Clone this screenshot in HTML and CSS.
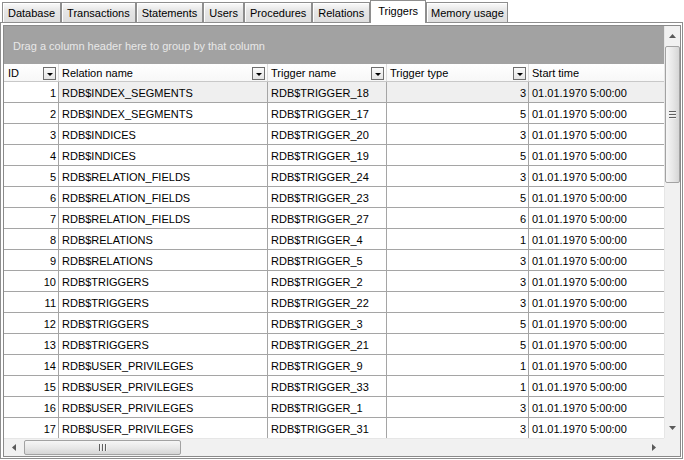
FILE: index.html
```html
<!DOCTYPE html>
<html>
<head>
<meta charset="utf-8">
<link rel="stylesheet" href="styles.css">
</head>
<body>
<div class="tabs">
  <div class="tab">Database</div>
  <div class="tab">Transactions</div>
  <div class="tab">Statements</div>
  <div class="tab">Users</div>
  <div class="tab">Procedures</div>
  <div class="tab">Relations</div>
  <div class="tab active">Triggers</div>
  <div class="tab">Memory usage</div>
</div>
<div class="panel">
  <div class="grid">
    <div class="main">
      <div class="group">Drag a column header here to group by that column</div>
      <div class="head cols">
        <div class="hcell"><span>ID</span><i class="dd"></i></div>
        <div class="hcell"><span>Relation name</span><i class="dd"></i></div>
        <div class="hcell"><span>Trigger name</span><i class="dd"></i></div>
        <div class="hcell"><span>Trigger type</span><i class="dd"></i></div>
        <div class="hcell"><span>Start time</span></div>
      </div>
      <div class="body">
        <div class="row cols focus"><div class="c num">1</div><div class="c">RDB$INDEX_SEGMENTS</div><div class="c">RDB$TRIGGER_18</div><div class="c num">3</div><div class="c">01.01.1970 5:00:00</div></div>
        <div class="row cols"><div class="c num">2</div><div class="c">RDB$INDEX_SEGMENTS</div><div class="c">RDB$TRIGGER_17</div><div class="c num">5</div><div class="c">01.01.1970 5:00:00</div></div>
        <div class="row cols"><div class="c num">3</div><div class="c">RDB$INDICES</div><div class="c">RDB$TRIGGER_20</div><div class="c num">3</div><div class="c">01.01.1970 5:00:00</div></div>
        <div class="row cols"><div class="c num">4</div><div class="c">RDB$INDICES</div><div class="c">RDB$TRIGGER_19</div><div class="c num">5</div><div class="c">01.01.1970 5:00:00</div></div>
        <div class="row cols"><div class="c num">5</div><div class="c">RDB$RELATION_FIELDS</div><div class="c">RDB$TRIGGER_24</div><div class="c num">3</div><div class="c">01.01.1970 5:00:00</div></div>
        <div class="row cols"><div class="c num">6</div><div class="c">RDB$RELATION_FIELDS</div><div class="c">RDB$TRIGGER_23</div><div class="c num">5</div><div class="c">01.01.1970 5:00:00</div></div>
        <div class="row cols"><div class="c num">7</div><div class="c">RDB$RELATION_FIELDS</div><div class="c">RDB$TRIGGER_27</div><div class="c num">6</div><div class="c">01.01.1970 5:00:00</div></div>
        <div class="row cols"><div class="c num">8</div><div class="c">RDB$RELATIONS</div><div class="c">RDB$TRIGGER_4</div><div class="c num">1</div><div class="c">01.01.1970 5:00:00</div></div>
        <div class="row cols"><div class="c num">9</div><div class="c">RDB$RELATIONS</div><div class="c">RDB$TRIGGER_5</div><div class="c num">3</div><div class="c">01.01.1970 5:00:00</div></div>
        <div class="row cols"><div class="c num">10</div><div class="c">RDB$TRIGGERS</div><div class="c">RDB$TRIGGER_2</div><div class="c num">3</div><div class="c">01.01.1970 5:00:00</div></div>
        <div class="row cols"><div class="c num">11</div><div class="c">RDB$TRIGGERS</div><div class="c">RDB$TRIGGER_22</div><div class="c num">3</div><div class="c">01.01.1970 5:00:00</div></div>
        <div class="row cols"><div class="c num">12</div><div class="c">RDB$TRIGGERS</div><div class="c">RDB$TRIGGER_3</div><div class="c num">5</div><div class="c">01.01.1970 5:00:00</div></div>
        <div class="row cols"><div class="c num">13</div><div class="c">RDB$TRIGGERS</div><div class="c">RDB$TRIGGER_21</div><div class="c num">5</div><div class="c">01.01.1970 5:00:00</div></div>
        <div class="row cols"><div class="c num">14</div><div class="c">RDB$USER_PRIVILEGES</div><div class="c">RDB$TRIGGER_9</div><div class="c num">1</div><div class="c">01.01.1970 5:00:00</div></div>
        <div class="row cols"><div class="c num">15</div><div class="c">RDB$USER_PRIVILEGES</div><div class="c">RDB$TRIGGER_33</div><div class="c num">1</div><div class="c">01.01.1970 5:00:00</div></div>
        <div class="row cols"><div class="c num">16</div><div class="c">RDB$USER_PRIVILEGES</div><div class="c">RDB$TRIGGER_1</div><div class="c num">3</div><div class="c">01.01.1970 5:00:00</div></div>
        <div class="row cols"><div class="c num">17</div><div class="c">RDB$USER_PRIVILEGES</div><div class="c">RDB$TRIGGER_31</div><div class="c num">3</div><div class="c">01.01.1970 5:00:00</div></div>
      </div>
    </div>
    <div class="vscroll">
      <div class="sbtn"><svg width="7" height="4" viewBox="0 0 7 4"><polygon points="0,4 7,4 3.5,0" fill="#5a5a5a"/></svg></div>
      <div class="vthumb"><span class="grip"></span><span class="grip"></span><span class="grip"></span></div>
      <div class="track"></div>
      <div class="sbtn"><svg width="7" height="4" viewBox="0 0 7 4"><polygon points="0,0 7,0 3.5,4" fill="#5a5a5a"/></svg></div>
    </div>
    <div class="hscroll">
      <div class="sbtn h"><svg width="4" height="7" viewBox="0 0 4 7"><polygon points="4,0 4,7 0,3.5" fill="#5a5a5a"/></svg></div>
      <div class="hthumb"><span class="vgrip"></span><span class="vgrip"></span><span class="vgrip"></span></div>
      <div class="track"></div>
      <div class="sbtn h"><svg width="4" height="7" viewBox="0 0 4 7"><polygon points="0,0 0,7 4,3.5" fill="#5a5a5a"/></svg></div>
    </div>
    <div class="corner"></div>
  </div>
</div>
</body>
</html>
```
FILE: styles.css
```css
html, body {
  margin: 0;
  padding: 0;
}
body {
  width: 684px;
  height: 460px;
  overflow: hidden;
  background: #fff;
  font-family: "Liberation Sans", Arial, sans-serif;
  font-size: 11px;
  color: #000;
}
.tabs {
  display: flex;
  align-items: flex-end;
  height: 22px;
  padding-left: 2px;
  position: relative;
  z-index: 2;
}
.tab {
  box-sizing: border-box;
  height: 20px;
  padding: 0 5px 0 5px;
  border: 1px solid #8e8e8e;
  border-bottom: none;
  background: linear-gradient(#fbfbfb, #e6e6e6 40%, #dedede);
  box-shadow: inset 1px 1px 0 #fff;
  line-height: 20px;
  white-space: nowrap;
}
.tab:last-child {
  padding: 0 3px 0 4px;
}
.tab.active {
  height: 23px;
  margin-bottom: -1px;
  padding: 0 7px 0 7px;
  background: #fff;
  box-shadow: none;
  line-height: 20px;
}
.panel {
  box-sizing: border-box;
  width: 683px;
  height: 437px;
  border: 1px solid #8e8e8e;
  padding: 2px 1px 1px 2px;
  display: flex;
}
.grid {
  flex: 1;
  border: 1px solid #8a8a8a;
  display: grid;
  grid-template-columns: 660px 16px;
  grid-template-rows: 412px 18px;
  overflow: hidden;
}
.main {
  display: flex;
  flex-direction: column;
  overflow: hidden;
}
.group {
  height: 38px;
  flex: none;
  box-sizing: border-box;
  background: #a2a2a2;
  color: #e8e8e8;
  padding: 2px 0 0 9px;
  display: flex;
  align-items: center;
}
.cols {
  display: grid;
  grid-template-columns: 55px 209px 119px 142px 135px;
}
.head {
  height: 18px;
  flex: none;
  box-sizing: border-box;
  border-bottom: 1px solid #c8c8c8;
  background: linear-gradient(#ffffff, #f7f7f7);
}
.hcell {
  box-sizing: border-box;
  border-right: 1px solid #dcdcdc;
  padding: 0 2px 0 3px;
  display: flex;
  align-items: center;
  justify-content: space-between;
  white-space: nowrap;
  overflow: hidden;
}
.hcell:first-child {
  padding-left: 4px;
}
.hcell:last-child {
  border-right: none;
}
.dd {
  box-sizing: border-box;
  width: 13px;
  height: 13px;
  margin-top: 2px;
  border: 1px solid #6e6e6e;
  background: linear-gradient(#fafafa, #e4e4e4);
  display: flex;
  align-items: center;
  justify-content: center;
  padding-top: 2px;
}
.dd::after {
  content: "";
  border-left: 3px solid transparent;
  border-right: 3px solid transparent;
  border-top: 3px solid #000;
}
.body {
  flex: 1;
  overflow: hidden;
}
.row {
  height: 21px;
}
.c {
  box-sizing: border-box;
  height: 21px;
  border-right: 1px solid #a5a5a5;
  border-bottom: 1px solid #a5a5a5;
  padding: 1px 2px 0 3px;
  line-height: 20px;
  white-space: nowrap;
  overflow: hidden;
}
.c:last-child {
  border-right: none;
}
.c.num {
  text-align: right;
}
.focus .c {
  background: #efefef;
}
.focus .c:first-child {
  background: #fff;
}
.vscroll {
  display: flex;
  flex-direction: column;
  background: #f1f1f1;
  box-shadow: inset 1px 0 0 #e6e6e6;
}
.sbtn {
  height: 20px;
  flex: none;
  display: flex;
  align-items: center;
  justify-content: center;
}
.sbtn.h {
  height: auto;
  width: 20px;
}
.vthumb {
  box-sizing: border-box;
  height: 137px;
  flex: none;
  margin: 0 0 0 1px;
  border: 1px solid #a2a2a2;
  border-radius: 2px;
  background: linear-gradient(to right, #f6f6f6, #e8e8e8 50%, #d6d6d6);
  display: flex;
  flex-direction: column;
  align-items: center;
  justify-content: center;
  gap: 1px;
}
.grip {
  width: 7px;
  height: 1px;
  background: #606060;
  box-shadow: 0 1px 0 #f4f4f4;
  margin-bottom: 1px;
}
.track {
  flex: 1;
}
.hscroll {
  display: flex;
  background: #f1f1f1;
  box-shadow: inset 0 1px 0 #e6e6e6;
}
.hthumb {
  box-sizing: border-box;
  width: 157px;
  flex: none;
  margin: 2px 0 1px 0;
  border: 1px solid #a2a2a2;
  border-radius: 2px;
  background: linear-gradient(#f6f6f6, #e8e8e8 50%, #d6d6d6);
  display: flex;
  align-items: center;
  justify-content: center;
  gap: 1px;
}
.vgrip {
  width: 1px;
  height: 7px;
  background: #606060;
  box-shadow: 1px 0 0 #f4f4f4;
  margin-right: 1px;
}
.corner {
  background: #f1f1f1;
}
```
